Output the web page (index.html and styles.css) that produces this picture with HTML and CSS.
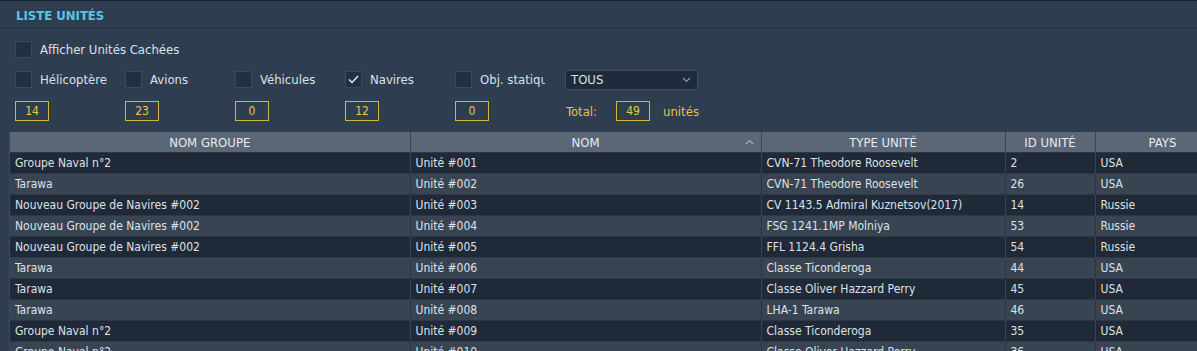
FILE: index.html
```html
<!DOCTYPE html>
<html lang="fr">
<head>
  <meta charset="UTF-8" />
  <title>Liste Unités</title>
  <link rel="stylesheet" href="styles.css">
</head>
<body>
  <div class="panel">
    <div class="title-bar">LISTE UNITÉS</div>

    <div class="options">
      <div class="opt-row">
        <label class="check"><span class="box"></span>Afficher Unités Cachées</label>
      </div>

      <div class="opt-row grid">
        <label class="check"><span class="box"></span>Hélicoptère</label>
        <label class="check"><span class="box"></span>Avions</label>
        <label class="check"><span class="box"></span>Véhicules</label>
        <label class="check"><span class="box checked"><svg width="11" height="9" viewBox="0 0 11 9"><path d="M1 4.5 L4 7.5 L10 1" fill="none" stroke="#e8ecf0" stroke-width="1.4"/></svg></span>Navires</label>
        <label class="check"><span class="box"></span><span class="clip">Obj. statiques</span></label>
        <div class="select">TOUS<svg width="9" height="6" viewBox="0 0 9 6"><path d="M1 1 L4.5 4.5 L8 1" fill="none" stroke="#8a96a4" stroke-width="1.2"/></svg></div>
      </div>

      <div class="opt-row grid counts">
        <span class="count">14</span>
        <span class="count">23</span>
        <span class="count">0</span>
        <span class="count">12</span>
        <span class="count">0</span>
        <div class="total">
          <span class="yellow">Total:</span>
          <span class="count">49</span>
          <span class="yellow">unités</span>
        </div>
      </div>
    </div>

    <div class="table-wrap">
      <table class="units">
        <colgroup>
          <col class="c1"><col class="c2"><col class="c3"><col class="c4"><col class="c5">
        </colgroup>
        <thead>
          <tr>
            <th>NOM GROUPE</th>
            <th class="sorted">NOM<svg class="sort" width="9" height="6" viewBox="0 0 9 6"><path d="M1 5 L4.5 1.5 L8 5" fill="none" stroke="#a8b0ba" stroke-width="1.2"/></svg></th>
            <th>TYPE UNITÉ</th>
            <th>ID UNITÉ</th>
            <th>PAYS</th>
          </tr>
        </thead>
        <tbody>
          <tr><td>Groupe Naval n°2</td><td>Unité #001</td><td>CVN-71 Theodore Roosevelt</td><td>2</td><td>USA</td></tr>
          <tr><td>Tarawa</td><td>Unité #002</td><td>CVN-71 Theodore Roosevelt</td><td>26</td><td>USA</td></tr>
          <tr><td>Nouveau Groupe de Navires #002</td><td>Unité #003</td><td>CV 1143.5 Admiral Kuznetsov(2017)</td><td>14</td><td>Russie</td></tr>
          <tr><td>Nouveau Groupe de Navires #002</td><td>Unité #004</td><td>FSG 1241.1MP Molniya</td><td>53</td><td>Russie</td></tr>
          <tr><td>Nouveau Groupe de Navires #002</td><td>Unité #005</td><td>FFL 1124.4 Grisha</td><td>54</td><td>Russie</td></tr>
          <tr><td>Tarawa</td><td>Unité #006</td><td>Classe Ticonderoga</td><td>44</td><td>USA</td></tr>
          <tr><td>Tarawa</td><td>Unité #007</td><td>Classe Oliver Hazzard Perry</td><td>45</td><td>USA</td></tr>
          <tr><td>Tarawa</td><td>Unité #008</td><td>LHA-1 Tarawa</td><td>46</td><td>USA</td></tr>
          <tr><td>Groupe Naval n°2</td><td>Unité #009</td><td>Classe Ticonderoga</td><td>35</td><td>USA</td></tr>
          <tr><td>Groupe Naval n°2</td><td>Unité #010</td><td>Classe Oliver Hazzard Perry</td><td>36</td><td>USA</td></tr>
        </tbody>
      </table>
    </div>
  </div>
</body>
</html>
```

FILE: styles.css
```css
body {
  margin: 0;
  background: #2e3d50;
  font-family: "DejaVu Sans Condensed", "DejaVu Sans", sans-serif;
  font-stretch: condensed;
  color: #dde2e8;
  overflow: hidden;
}

.panel {
  width: 1197px;
  height: 351px;
  overflow: hidden;
  border-top: 1px solid #1b2532;
  box-sizing: border-box;
}

.title-bar {
  height: 27px;
  line-height: 29px;
  padding-left: 16px;
  font-size: 13px;
  font-weight: bold;
  color: #5cc4e6;
  border-bottom: 1px solid #26333f;
  box-shadow: 0 1px 0 #34445a;
}

.options {
  padding: 12px 0 0 15px;
}

.opt-row {
  display: flex;
  align-items: center;
  height: 17px;
  margin-bottom: 13px;
}

.opt-row.grid {
  display: grid;
  grid-template-columns: repeat(5, 110px) auto;
  grid-template-rows: 17px;
  align-items: start;
}

.opt-row.counts {
  height: 20px;
  grid-template-rows: 20px;
  margin-bottom: 11px;
}

.check {
  display: flex;
  align-items: center;
  gap: 8px;
  height: 17px;
  font-size: 13px;
  white-space: nowrap;
}

.clip {
  display: inline-block;
  width: 65px;
  overflow: hidden;
}

.box {
  width: 15px;
  height: 15px;
  background: #223044;
  border: 1px solid #3a4a5e;
  display: flex;
  align-items: center;
  justify-content: center;
}

.select {
  width: 120px;
  height: 18px;
  margin: -1px 0 -2px;
  padding: 0 6px 0 5px;
  background: #1f2b3b;
  border: 1px solid #3e4d60;
  border-radius: 2px;
  font-size: 13px;
  line-height: 18px;
  display: flex;
  align-items: center;
  justify-content: space-between;
}

.count {
  width: 32px;
  height: 18px;
  border: 1px solid #cdb63c;
  color: #e4cb42;
  font-size: 12px;
  line-height: 18px;
  text-align: center;
}

.total {
  display: flex;
  align-items: center;
  margin-left: 1px;
}

.yellow {
  color: #e0c640;
  font-size: 13px;
}

.total .count {
  margin: 0 13px 0 19px;
}

.table-wrap {
  margin-left: 9px;
  border-left: 1px solid #3c4b5f;
}

.units {
  border-collapse: collapse;
  table-layout: fixed;
  width: 1220px;
  font-size: 12px;
}

.c1 { width: 400px; }
.c2 { width: 351px; }
.c3 { width: 244px; }
.c4 { width: 90px; }
.c5 { width: 135px; }

.units th {
  height: 20px;
  padding: 0;
  background: #5b6676;
  color: #e8ebef;
  font-size: 13px;
  font-weight: normal;
  text-align: center;
  border-right: 1px solid #3a4453;
  position: relative;
}

.sort {
  position: absolute;
  right: 7px;
  top: 7px;
}

.units td {
  height: 20px;
  padding: 0 5px;
  white-space: nowrap;
  overflow: hidden;
  border-top: 1px solid #2c3747;
  border-right: 1px solid #3a4556;
}

.units tbody tr:nth-child(odd) td {
  background: #1f2937;
}

.units tbody tr:nth-child(even) td {
  background: #394453;
  border-right-color: #2a3441;
}
```
